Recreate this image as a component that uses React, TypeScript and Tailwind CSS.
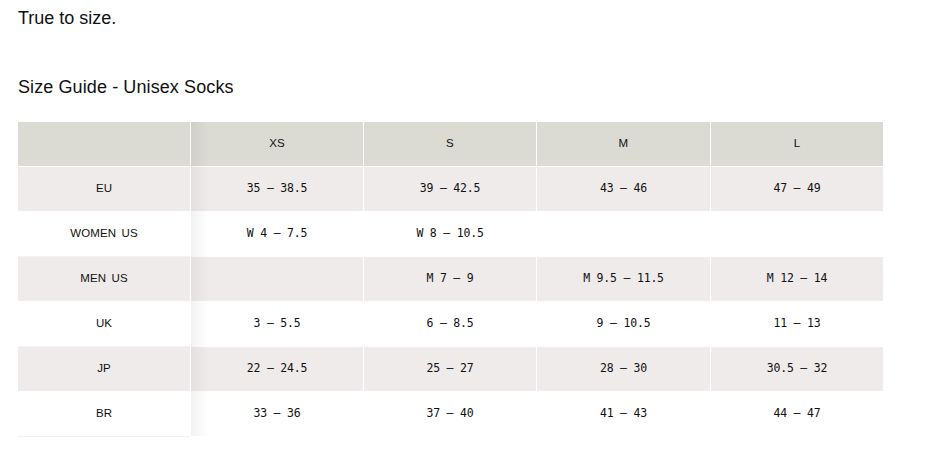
import React from "react";

const sizes = ["XS", "S", "M", "L"];
const rows: { label: string; vals: string[]; shaded: boolean }[] = [
  { label: "EU", vals: ["35 – 38.5", "39 – 42.5", "43 – 46", "47 – 49"], shaded: true },
  { label: "WOMEN US", vals: ["W 4 – 7.5", "W 8 – 10.5", "", ""], shaded: false },
  { label: "MEN US", vals: ["", "M 7 – 9", "M 9.5 – 11.5", "M 12 – 14"], shaded: true },
  { label: "UK", vals: ["3 – 5.5", "6 – 8.5", "9 – 10.5", "11 – 13"], shaded: false },
  { label: "JP", vals: ["22 – 24.5", "25 – 27", "28 – 30", "30.5 – 32"], shaded: true },
  { label: "BR", vals: ["33 – 36", "37 – 40", "41 – 43", "44 – 47"], shaded: false },
];

const sans = { fontFamily: '"Liberation Sans", Arial, sans-serif' };
const mono = { fontFamily: '"DejaVu Sans Mono", "Liberation Mono", monospace' };

export default function App() {
  return (
    <div className="min-h-[471px] w-[925px] bg-white pt-[6px] text-[#111]" style={sans}>
      <p className="ml-[18px] text-[18px] leading-[24px]">True to size.</p>
      <h2 className="ml-[18px] mt-[45px] text-[18px] leading-[24px] font-normal tracking-[0.1px]">Size Guide - Unisex Socks</h2>
      <div className="relative ml-[18px] mt-[23px] w-[865px]">
        <div className="grid grid-cols-[172px_172px_172px_173px_172px] gap-px bg-white">
          <div className="h-[44px] bg-[#dbdad3]" />
          {sizes.map((s) => (
            <div key={s} className="flex h-[44px] items-center justify-center bg-[#dbdad3] text-[11.5px] tracking-[0.2px]">
              {s}
            </div>
          ))}
          {rows.map((r) => (
            <React.Fragment key={r.label}>
              <div
                className={`flex h-[44px] items-center justify-center text-[11.5px] tracking-[0.1px] [word-spacing:2px] ${
                  r.shaded ? "bg-[#efebea]" : "bg-white shadow-[0_1px_0_#f2f2f2]"
                }`}
              >
                {r.label}
              </div>
              {r.vals.map((v, i) => (
                <div
                  key={i}
                  className={`flex h-[44px] items-center justify-center text-[11.5px] tracking-[-0.2px] text-[#111] ${
                    r.shaded ? "bg-[#efebea]" : "bg-white"
                  }`}
                  style={mono}
                >
                  {v}
                </div>
              ))}
            </React.Fragment>
          ))}
        </div>
        <div className="pointer-events-none absolute bottom-0 left-[173px] top-0 w-[18px] bg-gradient-to-r from-black/[0.05] to-transparent" />
      </div>
    </div>
  );
}
